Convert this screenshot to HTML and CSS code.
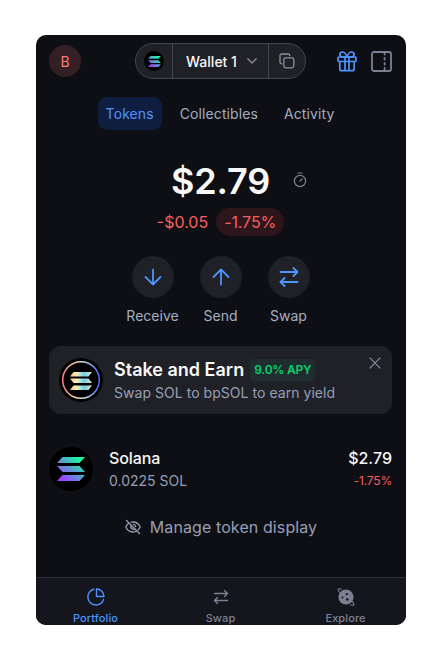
FILE: index.html
```html
<!DOCTYPE html>
<html lang="en">
<head>
    <meta charset="UTF-8">
    <meta name="viewport" content="width=device-width, initial-scale=1.0">
    <title>Wallet</title>
    <link rel="stylesheet" href="styles.css">
</head>
<body>
    <svg class="defs" width="0" height="0">
        <defs>
            <linearGradient id="solana" gradientUnits="userSpaceOnUse" x1="24" y1="0" x2="4" y2="24">
                <stop offset="0.1" stop-color="#19f5a0"/>
                <stop offset="0.5" stop-color="#5c9bd0"/>
                <stop offset="0.9" stop-color="#9945ff"/>
            </linearGradient>
            <linearGradient id="stake" x1="0" y1="0" x2="1" y2="0">
                <stop offset="0" stop-color="#ffbd8a"/>
                <stop offset="0.3" stop-color="#fff0b0"/>
                <stop offset="0.65" stop-color="#66d0f5"/>
                <stop offset="1" stop-color="#ffe2a8"/>
            </linearGradient>
            <linearGradient id="ring" x1="0" y1="0" x2="1" y2="0">
                <stop offset="0" stop-color="#ff7f8d"/>
                <stop offset="0.35" stop-color="#ffd9a0"/>
                <stop offset="0.65" stop-color="#b5dcf5"/>
                <stop offset="1" stop-color="#4d6dff"/>
            </linearGradient>
            <symbol id="sol-bars" viewBox="0 0 28 24">
                <path d="M5.500 0H28l-5.500 6H0zM0 9h22.500L28 15H5.500zM5.500 18H28l-5.500 6H0z"/>
            </symbol>
            <symbol id="swap" viewBox="0 0 20 20">
                <path d="M1.500 5h17M14.500 1l4 4-4 4M18.500 15h-17M5.500 11l-4 4 4 4"/>
            </symbol>
        </defs>
    </svg>

    <div class="wallet">
        <header class="header">
            <div class="avatar">B</div>
            <div class="wallet-picker">
                <div class="picker-part">
                    <span class="coin coin-small"><svg width="13" height="11" fill="url(#solana)"><use href="#sol-bars"/></svg></span>
                </div>
                <div class="picker-part picker-name">
                    <span>Wallet 1</span>
                    <svg class="line" width="10" height="6" viewBox="0 0 10 6" stroke-width="1.300"><path d="M.8.8L5 5 9.200.8"/></svg>
                </div>
                <div class="picker-part">
                    <svg class="line" width="16" height="16" viewBox="0 0 16 16" stroke-width="1.300"><rect x="4.800" y="4.800" width="10" height="10" rx="1.800"/><path d="M2.800 10.800C1.600 10.800 1 10.100 1 9V2.800C1 1.600 1.700 1 2.800 1H9c1.100 0 1.800.6 1.800 1.700"/></svg>
                </div>
            </div>
            <div class="header-icons">
                <svg class="line blue" width="20" height="21" viewBox="0 0 20 21" stroke-width="1.700"><rect x="1" y="6" width="18" height="4.500" rx="1"/><path d="M2.800 10.500v7.200c0 1.300.7 2 2 2h10.400c1.300 0 2-.7 2-2v-7.200M8 6v13.700M12 6v13.700M9.500 6H5.800C4 6 2.900 5 2.900 3.500S4 1 5.500 1C8 1 9 3 10 6M10.500 6h3.700c1.800 0 2.900-1 2.900-2.500S16 1 14.500 1C12 1 11 3 10 6"/></svg>
                <svg class="line" width="21" height="21" viewBox="0 0 21 21" stroke-width="1.800"><rect x="1" y="1" width="19" height="19" rx="2"/><path d="M13.600 2v1.500M13.600 7v1.500M13.600 12v1.500M13.600 17v1.500"/></svg>
            </div>
        </header>

        <nav class="tabs">
            <a class="tab active">Tokens</a>
            <a class="tab">Collectibles</a>
            <a class="tab">Activity</a>
        </nav>

        <section class="balance">
            <span></span>
            <span class="balance-value">$2.79</span>
            <svg class="line timer" width="14" height="16" viewBox="0 0 14 16" stroke-width="1.200"><circle cx="7" cy="9" r="5.600"/><path d="M5 1h4M7 9l2.200-2.200"/></svg>
        </section>
        <div class="change">
            <span>-$0.05</span>
            <span class="change-percent">-1.75%</span>
        </div>

        <section class="actions">
            <div class="action">
                <span class="action-icon"><svg class="line blue" width="18" height="18" viewBox="0 0 18 18" stroke-width="1.800"><path d="M9 1.500v15M1.500 9L9 16.500 16.500 9"/></svg></span>
                Receive
            </div>
            <div class="action">
                <span class="action-icon"><svg class="line blue" width="18" height="18" viewBox="0 0 18 18" stroke-width="1.800"><path d="M9 16.500v-15M1.500 9L9 1.500 16.500 9"/></svg></span>
                Send
            </div>
            <div class="action">
                <span class="action-icon"><svg class="line blue" width="20" height="20" stroke-width="1.800"><use href="#swap"/></svg></span>
                Swap
            </div>
        </section>

        <section class="banner">
            <svg width="44" height="44" viewBox="0 0 44 44">
                <circle cx="22" cy="22" r="22"/>
                <circle cx="22" cy="22" r="18.300" fill="none" stroke="url(#ring)" stroke-width="1.500"/>
                <path fill="url(#stake)" d="M14.500 14H33l-3.500 4.500H11zM11 20.500h18.500L33 25H14.500zM14.500 27.500H33L29.500 32H11z"/>
            </svg>
            <div class="banner-text">
                <div class="banner-title">Stake and Earn <span class="apy">9.0% APY</span></div>
                <div class="banner-subtitle">Swap SOL to bpSOL to earn yield</div>
            </div>
            <svg class="line close" width="12" height="12" viewBox="0 0 12 12" stroke-width="1.200"><path d="M1 1l10 10M11 1L1 11"/></svg>
        </section>

        <section class="token">
            <span class="coin"><svg width="28" height="24" fill="url(#solana)"><use href="#sol-bars"/></svg></span>
            <div class="token-info">
                <div class="token-name">Solana</div>
                <div class="token-amount">0.0225 SOL</div>
            </div>
            <div class="token-price">
                <div class="token-value">$2.79</div>
                <div class="token-change">-1.75%</div>
            </div>
        </section>

        <div class="manage">
            <svg class="line" width="16" height="16" viewBox="0 0 16 16" stroke-width="1.300"><path d="M1.500 1.500l13 13M4 4C2.500 5 1.500 6.500.8 8c1.400 3 4 5 7.200 5 1.400 0 2.700-.4 3.800-1M6.200 3.200C6.800 3.100 7.400 3 8 3c3.200 0 5.800 2 7.200 5-.5 1-1.100 1.900-1.900 2.700M6.200 6.200a2.600 2.600 0 0 0 3.600 3.600M8.400 5.400A2.600 2.600 0 0 1 10.600 7.600"/></svg>
            <span>Manage token display</span>
        </div>

        <nav class="bottom-nav">
            <a class="nav-item active">
                <svg class="line" width="18" height="18" viewBox="0 0 18 18" stroke-width="1.400"><path d="M6.800 1.300a8 8 0 1 0 9.700 10.200M9.500 1v7.500H17A7.500 7.500 0 0 0 9.500 1z"/></svg>
                Portfolio
            </a>
            <a class="nav-item">
                <svg class="line" width="18" height="18" viewBox="0 0 18 18" stroke-width="1.400"><path d="M2.500 5.500h13M12.500 2.500l3 3-3 3M15.500 12.500h-13M5.500 9.500l-3 3 3 3"/></svg>
                Swap
            </a>
            <a class="nav-item">
                <svg width="18" height="18" viewBox="0 0 18 18"><circle cx="9" cy="9" r="7.600" fill="#7d8093"/><path d="M3 5C.3 1.600.3-.2 4.800 1.200M15 13c2.700 3.400 2.700 5.200-1.800 3.800" fill="none" stroke="#7d8093" stroke-width="1.200"/><g fill="#14151d"><circle cx="9.800" cy="6.200" r="1.100"/><circle cx="5.500" cy="9.500" r="1"/><circle cx="10.300" cy="11.500" r="1.300"/></g></svg>
                Explore
            </a>
        </nav>
    </div>
</body>
</html>
```
FILE: styles.css
```css
* {
    box-sizing: border-box;
}

body {
    margin: 0;
    padding: 35px 36px;
    background: #fff;
    font-family: Inter, sans-serif;
    color: #f8f8f8;
}

svg {
    display: block;
    flex-shrink: 0;
}

.defs {
    position: absolute;
}

.line {
    fill: none;
    stroke: currentColor;
    stroke-linecap: round;
    stroke-linejoin: round;
    color: #7d8093;
}

.line.blue {
    color: #4c94ff;
}

.wallet {
    display: flex;
    flex-direction: column;
    width: 370px;
    height: 590px;
    padding-top: 8px;
    background: #0e0f14;
    border-radius: 10px;
    overflow: hidden;
}

.header {
    display: grid;
    grid-template-columns: 1fr auto 1fr;
    align-items: center;
    height: 36px;
    padding: 0 14px 0 13px;
}

.avatar {
    display: flex;
    align-items: center;
    justify-content: center;
    width: 32px;
    height: 32px;
    border-radius: 50%;
    background: #332024;
    color: #fa7c7c;
    font-size: 14px;
}

.wallet-picker {
    display: flex;
    height: 36px;
    border: 1px solid #44464d;
    border-radius: 18px;
    background: #202127;
}

.picker-part {
    display: flex;
    align-items: center;
    justify-content: center;
    width: 36px;
}

.picker-name {
    gap: 10px;
    width: 97px;
    padding-left: 2px;
    border: solid #44464d;
    border-width: 0 1px;
    font-size: 14px;
    font-weight: 500;
}

.picker-part .line {
    color: #8a8fa3;
}

.coin {
    display: flex;
    align-items: center;
    justify-content: center;
    width: 44px;
    height: 44px;
    border-radius: 50%;
    background: #000;
}

.coin-small {
    width: 20px;
    height: 20px;
}

.header-icons {
    display: flex;
    align-items: center;
    justify-content: flex-end;
    gap: 14px;
}

.tabs {
    display: flex;
    justify-content: center;
    gap: 10px;
    margin: 18px 2px 0 0;
}

.tab {
    height: 33px;
    padding: 0 8px;
    border-radius: 9px;
    color: #a4adc2;
    font-size: 14px;
    line-height: 33px;
    letter-spacing: 0.1px;
}

.tab.active {
    background: #0f1e40;
    color: #4c94ff;
}

.balance {
    display: grid;
    grid-template-columns: 1fr auto 1fr;
    align-items: center;
    column-gap: 23px;
    height: 44px;
    margin: 29px 1px 0 0;
}

.balance-value {
    font-size: 36px;
    font-weight: 600;
    letter-spacing: -0.2px;
}

.timer {
    margin-bottom: 2px;
}

.change {
    display: flex;
    align-items: center;
    justify-content: center;
    gap: 8px;
    margin: 5px 1px 0 0;
    color: #fb5d5f;
    font-size: 16px;
}

.change-percent {
    height: 28px;
    padding: 0 8px;
    border-radius: 14px;
    background: #2d161b;
    line-height: 28px;
    letter-spacing: -0.1px;
}

.actions {
    display: flex;
    justify-content: center;
    gap: 8px;
    margin: 20px 1px 0 0;
}

.action {
    display: flex;
    flex-direction: column;
    align-items: center;
    gap: 9px;
    width: 60px;
    color: #a4adc2;
    font-size: 14px;
    line-height: 18px;
}

.action-icon {
    display: flex;
    align-items: center;
    justify-content: center;
    width: 42px;
    height: 42px;
    border-radius: 50%;
    background: #202127;
}

.banner {
    display: flex;
    align-items: center;
    height: 68px;
    margin: 21px 14px 0 13px;
    padding: 0 11px 0 10px;
    border-radius: 12px;
    background: #202127;
}

.banner-text {
    flex: 1;
    margin-left: 11px;
    padding-top: 2px;
}

.banner-title {
    display: flex;
    align-items: center;
    gap: 6px;
    font-size: 18px;
    font-weight: 600;
    line-height: 24px;
    white-space: nowrap;
}

.apy {
    height: 22px;
    padding: 0 4px;
    border-radius: 4px;
    background: #202d2e;
    color: #0bce71;
    font-size: 12px;
    font-weight: 600;
    line-height: 22px;
    letter-spacing: -0.2px;
}

.banner-subtitle {
    color: #969fb5;
    font-size: 14px;
    line-height: 22px;
    letter-spacing: 0.04px;
    white-space: nowrap;
}

.close {
    align-self: flex-start;
    margin-top: 11px;
}

.token {
    display: flex;
    align-items: center;
    margin-top: 32px;
    padding: 0 14px 0 13px;
}

.token-info {
    flex: 1;
    margin-left: 16px;
}

.token-price {
    text-align: right;
}

.token-name,
.token-value {
    font-size: 16px;
    font-weight: 500;
    line-height: 24px;
}

.token-name {
    letter-spacing: -0.1px;
}

.token-amount,
.token-change {
    color: #969fb5;
    font-size: 14px;
    line-height: 22px;
}

.token-change {
    color: #fb5d5f;
    font-size: 12px;
    letter-spacing: -0.2px;
}

.manage {
    display: flex;
    align-items: center;
    justify-content: center;
    gap: 9px;
    height: 24px;
    margin-top: 23px;
    color: #969fb5;
    font-size: 16px;
    letter-spacing: 0.1px;
}

.manage .line {
    color: #969fb5;
}

.bottom-nav {
    display: flex;
    justify-content: space-between;
    height: 48px;
    margin-top: auto;
    padding: 10px 35px 0 34px;
    border-top: 1px solid #303138;
    background: #14151d;
}

.nav-item {
    display: flex;
    flex-direction: column;
    align-items: center;
    gap: 5px;
    width: 51px;
    color: #7d8093;
    font-size: 11px;
    font-weight: 500;
    line-height: 14px;
    letter-spacing: 0.1px;
}

.nav-item.active,
.nav-item.active .line {
    color: #4c94ff;
}
```
